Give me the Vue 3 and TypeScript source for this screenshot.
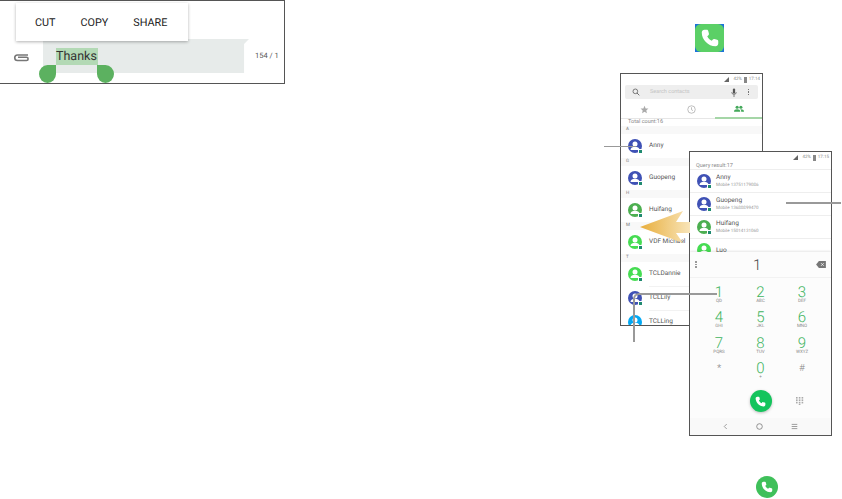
<template>
  <div class="page">
    <!-- message snippet -->
    <div class="snippet">
      <div class="popup">
        <span>CUT</span>
        <span>COPY</span>
        <span>SHARE</span>
      </div>
      <div class="compose">
        <svg class="clip" viewBox="0 0 16 9" width="16" height="9">
          <path d="M15 2H4.500a2.500 2.500 0 0 0 0 5.500h9a1.600 1.600 0 0 0 0-3.200H5" fill="none" stroke="#777" stroke-width="1.600" />
        </svg>
        <div class="bubble">
          <span class="selected">Thanks</span>
          <i class="handle handle-left"></i>
          <i class="handle handle-right"></i>
        </div>
        <span class="counter">154 / 1</span>
      </div>
    </div>

    <!-- top launcher icon -->
    <div class="launcher">
      <div class="launcher-face">
        <svg viewBox="0 0 24 24" width="22" height="22">
          <path :d="callPath" fill="#fff" />
        </svg>
      </div>
    </div>

    <!-- contacts phone -->
    <div class="phone phone-contacts">
      <div class="status">
        <svg viewBox="0 0 6 6" width="5" height="5"><path d="M0 6 6 0v6z" fill="#666" /></svg>
        <span>42%</span>
        <i class="battery"></i>
        <span>17:14</span>
      </div>
      <div class="search">
        <svg viewBox="0 0 12 12" width="8" height="8">
          <circle cx="5" cy="5" r="3.500" fill="none" stroke="#666" stroke-width="1.300" />
          <path d="m7.500 7.500 3.500 3.500" stroke="#666" stroke-width="1.400" />
        </svg>
        <span class="search-text">Search contacts</span>
        <svg viewBox="0 0 8 12" width="6" height="9">
          <rect x="2.500" y="0.500" width="3" height="7" rx="1.500" fill="#555" />
          <path d="M1 5.500a3 3 0 0 0 6 0M4 9v3" fill="none" stroke="#555" />
        </svg>
        <span class="kebab"><i></i><i></i><i></i></span>
      </div>
      <div class="tabs">
        <div class="tab">
          <svg viewBox="0 0 24 24" width="9" height="9"><path d="m12 2 3 7 7.500.6-5.700 5 1.700 7.400-6.500-4-6.500 4 1.700-7.400-5.700-5L9 9z" fill="#aaa" /></svg>
        </div>
        <div class="tab">
          <svg viewBox="0 0 12 12" width="9" height="9">
            <circle cx="6" cy="6" r="5" fill="none" stroke="#aaa" />
            <path d="M6 3v3.300l2 1.200" fill="none" stroke="#aaa" />
          </svg>
        </div>
        <div class="tab tab-active">
          <svg viewBox="0 0 16 10" width="10" height="7">
            <circle cx="5" cy="3" r="2.500" fill="#43a85a" />
            <circle cx="11" cy="3" r="2.500" fill="#43a85a" />
            <path d="M0 10c0-3 2-4 5-4s5 1 5 4zM11 6c3 0 5 1 5 4h-4.500c0-2-.5-3-1.500-3.800z" fill="#43a85a" />
          </svg>
        </div>
      </div>
      <div class="total">Total count:16</div>
      <template v-for="group in contactGroups" :key="group.letter">
        <div class="letter">{{ group.letter }}</div>
        <div v-for="c in group.items" :key="c.name" class="contact">
          <span class="avatar" :style="{ background: c.color }">
            <svg viewBox="0 0 14 14" width="14" height="14">
              <circle cx="7" cy="5" r="2.500" fill="#fff" />
              <path d="M2.500 11c0-2.300 2.200-3.200 4.500-3.200s4.500.9 4.500 3.200z" fill="#fff" />
            </svg>
            <i class="badge"></i>
          </span>
          <span class="contact-name">{{ c.name }}</span>
        </div>
      </template>
    </div>

    <!-- arrow between the two phones -->
    <svg class="swipe-arrow" viewBox="0 0 50 32" width="50" height="32">
      <defs>
        <linearGradient id="gold" x1="0" x2="1" y1="0" y2="0">
          <stop offset="0" stop-color="#e8ae3c" />
          <stop offset="1" stop-color="#f8e4b8" />
        </linearGradient>
      </defs>
      <path d="M0 16 43 0l-7 11h14v11H36l7 10z" fill="url(#gold)" />
    </svg>

    <!-- dialer phone -->
    <div class="phone phone-dialer">
      <div class="status status-dialer">
        <svg viewBox="0 0 6 6" width="5" height="5"><path d="M0 6 6 0v6z" fill="#666" /></svg>
        <span>42%</span>
        <i class="battery"></i>
        <span>17:15</span>
      </div>
      <div class="total query">Query result:17</div>
      <div class="results">
        <div v-for="r in results" :key="r.name" class="result">
          <span class="avatar" :style="{ background: r.color }">
            <svg viewBox="0 0 14 14" width="14" height="14">
              <circle cx="7" cy="5" r="2.500" fill="#fff" />
              <path d="M2.500 11c0-2.300 2.200-3.200 4.500-3.200s4.500.9 4.500 3.200z" fill="#fff" />
            </svg>
            <i class="badge"></i>
          </span>
          <div class="result-text">
            <div class="result-name">{{ r.name }}</div>
            <div class="result-number">{{ r.number }}</div>
          </div>
        </div>
      </div>
      <div class="dialer">
        <div class="display">
          <span class="kebab kebab-light"><i></i><i></i><i></i></span>
          <span class="display-num">1</span>
          <svg viewBox="0 0 14 10" width="10" height="7">
            <path d="M4 0h10v10H4L0 5z" fill="#777" />
            <path d="m7 3 4 4m0-4L7 7" stroke="#fff" />
          </svg>
        </div>
        <div class="keys">
          <div v-for="k in keys" :key="k.digit" class="key">
            <span class="digit" :class="{ symbol: k.symbol }">{{ k.digit }}</span>
            <span class="sub">{{ k.sub }}</span>
          </div>
        </div>
        <div class="call-row">
          <span class="call-btn">
            <svg viewBox="0 0 24 24" width="13" height="13"><path :d="callPath" fill="#fff" /></svg>
          </span>
          <svg class="pad" viewBox="0 0 10 10" width="8" height="8">
            <g fill="#aaa">
              <template v-for="y in [0, 3, 6]" :key="y">
                <rect v-for="x in [0, 3.5, 7]" :key="x" :x="x" :y="y" width="2" height="2" />
              </template>
              <rect x="3.500" y="8.500" width="2" height="1.500" />
            </g>
          </svg>
        </div>
        <div class="nav">
          <svg viewBox="0 0 8 10" width="5" height="7"><path d="M6 1 2 5l4 4" fill="none" stroke="#777" stroke-width="1.100" /></svg>
          <svg viewBox="0 0 10 10" width="7" height="7"><circle cx="5" cy="5" r="4" fill="none" stroke="#777" stroke-width="1.100" /></svg>
          <svg viewBox="0 0 10 10" width="7" height="7"><path d="M1 2h8M1 5h8M1 8h8" stroke="#777" stroke-width="1" /></svg>
        </div>
      </div>
    </div>

    <!-- callout lines -->
    <i class="line line-anny"></i>
    <i class="line line-result"></i>
    <i class="line-corner"></i>

    <!-- bottom call button -->
    <span class="call-bottom">
      <svg viewBox="0 0 24 24" width="14" height="14"><path :d="callPath" fill="#fff" /></svg>
    </span>
  </div>
</template>

<script setup lang="ts">
interface Contact {
  name: string
  color: string
}

const BLUE = '#3f51b5'
const GREEN = '#4caf50'
const LIME = '#46dc52'
const SKY = '#03a9f4'

// rounded handset, same shape in all three call icons
const callPath =
  'M6 3h2.500c.8 0 1.300.5 1.500 1.200l.8 3c.2.7 0 1.300-.5 1.700l-1.300 1.100c1 2.200 2.800 4 5 5l1.100-1.300c.4-.5 1-.7 1.700-.5l3 .8c.7.2 1.200.7 1.200 1.500V18c0 1.600-1.400 3-3 3C10 21 3 14 3 6c0-1.600 1.400-3 3-3z'

const contactGroups: { letter: string; items: Contact[] }[] = [
  { letter: 'A', items: [{ name: 'Anny', color: BLUE }] },
  { letter: 'G', items: [{ name: 'Guopeng', color: BLUE }] },
  { letter: 'H', items: [{ name: 'Huifang', color: GREEN }] },
  { letter: 'M', items: [{ name: 'VDF Michael', color: LIME }] },
  {
    letter: 'T',
    items: [
      { name: 'TCLDannie', color: LIME },
      { name: 'TCLLily', color: BLUE },
      { name: 'TCLLing', color: SKY },
    ],
  },
]

const results = [
  { name: 'Anny', number: 'Mobile 13751179086', color: BLUE },
  { name: 'Guopeng', number: 'Mobile 13680899470', color: BLUE },
  { name: 'Huifang', number: 'Mobile 15014131060', color: GREEN },
  { name: 'Luo', number: '', color: LIME },
]

const keys = [
  { digit: '1', sub: 'QD' },
  { digit: '2', sub: 'ABC' },
  { digit: '3', sub: 'DEF' },
  { digit: '4', sub: 'GHI' },
  { digit: '5', sub: 'JKL' },
  { digit: '6', sub: 'MNO' },
  { digit: '7', sub: 'PQRS' },
  { digit: '8', sub: 'TUV' },
  { digit: '9', sub: 'WXYZ' },
  { digit: '*', sub: '', symbol: true },
  { digit: '0', sub: '+' },
  { digit: '#', sub: '', symbol: true },
]
</script>

<style>
body {
  background: #fff;
}
</style>

<style scoped>
.page {
  position: relative;
  width: 842px;
  height: 499px;
  overflow: hidden;
  background: #fff;
  font-family: Roboto, "Liberation Sans", sans-serif;
  text-rendering: geometricPrecision;
}

.snippet {
  position: relative;
  box-sizing: border-box;
  width: 285px;
  height: 84px;
  padding-top: 38px;
  border: solid #555;
  border-width: 1px 1px 1px 0;
  overflow: hidden;
}
.popup {
  position: absolute;
  left: 16px;
  top: 2px;
  width: 172px;
  height: 38px;
  box-sizing: border-box;
  padding: 1px 0 0 19px;
  display: flex;
  align-items: center;
  gap: 25px;
  background: #fff;
  box-shadow: 0 1px 3px rgba(0, 0, 0, 0.3);
  font-size: 10.800px;
  color: #222;
  z-index: 2;
}
.compose {
  display: flex;
  align-items: flex-start;
}
.clip {
  margin: 14px 15px 0 13px;
}
.bubble {
  position: relative;
  width: 206px;
  height: 34px;
  margin-left: -1px;
}
/* the tail on the top right is cut out of the background only, the handles hang below it */
.bubble::before {
  content: "";
  position: absolute;
  inset: 0;
  background: #e7ebea;
  clip-path: polygon(0 0, 100% 0, 97.600% 15%, 97.600% 100%, 0 100%);
}
.selected {
  position: absolute;
  left: 13px;
  top: 9px;
  width: 42px;
  height: 17px;
  line-height: 18px;
  background: #b3d9b5;
  font-size: 12.500px;
  color: #333;
  white-space: nowrap;
}
.handle {
  position: absolute;
  top: 26px;
  width: 17px;
  height: 18px;
  background: #5cb160;
  border-radius: 50%;
}
.handle-left {
  left: -4px;
  border-top-right-radius: 0;
}
.handle-right {
  left: 54px;
  border-top-left-radius: 0;
}
.counter {
  margin: 12px 0 0 6px;
  font-size: 7.500px;
  color: #555;
  white-space: nowrap;
}

.launcher {
  position: absolute;
  left: 695px;
  top: 24px;
  width: 29px;
  height: 28px;
  background: #1b73d8;
}
.launcher-face {
  width: 100%;
  height: 100%;
  display: flex;
  align-items: center;
  justify-content: center;
  background: #5bd066;
  border-radius: 6px;
}

.phone {
  position: absolute;
  box-sizing: border-box;
  width: 143px;
  border: 1px solid #555;
  background: #fff;
  overflow: hidden;
}
.phone-contacts {
  left: 620px;
  top: 73px;
  height: 253px;
}
.phone-dialer {
  left: 689px;
  top: 151px;
  height: 285px;
}

.status {
  height: 11px;
  display: flex;
  align-items: center;
  justify-content: flex-end;
  gap: 2px;
  padding-right: 2px;
  font-size: 4.500px;
  color: #888;
}
.battery {
  width: 3px;
  height: 6px;
  background: #888;
}
.status svg {
  margin-right: 2px;
}
.search {
  height: 14px;
  margin: 0 4px;
  padding: 0 9px 0 7px;
  display: flex;
  align-items: center;
  background: #eeeeee;
  border-radius: 2px;
}
.search-text {
  flex: 1;
  margin-left: 10px;
  font-size: 5.500px;
  color: #c4c4c4;
}
.kebab {
  display: flex;
  flex-direction: column;
  gap: 1px;
  margin-left: 11px;
}
.kebab i {
  width: 1.500px;
  height: 1.500px;
  background: #777;
}
.kebab-light {
  margin-left: 0;
}
.kebab-light i {
  background: #999;
}
.tabs {
  display: flex;
  height: 19px;
  margin-top: 1px;
  border-bottom: 1px solid #e6e6e6;
  box-sizing: border-box;
}
.tab {
  flex: 1;
  display: flex;
  align-items: center;
  justify-content: center;
}
.tab-active {
  border-bottom: 2px solid #a5d6a7;
  margin-bottom: -1px;
}
.total {
  height: 7px;
  line-height: 6px;
  padding-left: 7px;
  font-size: 5.500px;
  color: #888;
}
.query {
  height: 6px;
  padding-left: 6px;
}
.letter {
  height: 8px;
  line-height: 8px;
  padding-left: 5px;
  background: #f8f8f8;
  font-size: 4.500px;
  color: #777;
}
.contact {
  height: 24px;
  display: flex;
  align-items: center;
  padding-left: 7px;
}
.avatar {
  position: relative;
  flex: none;
  width: 14px;
  height: 14px;
  border-radius: 50%;
  display: block;
}
.avatar svg {
  display: block;
}
.badge {
  position: absolute;
  right: -1px;
  bottom: -0.500px;
  width: 5px;
  height: 5px;
  background: #1f8a70;
  border: 0.500px solid #fff;
  box-sizing: border-box;
}
.contact-name {
  flex: 1;
  margin-left: 7px;
  line-height: 23px;
  height: 24px;
  font-size: 6.500px;
  color: #555;
}
.contact + .contact .contact-name {
  box-shadow: inset 0 1px #f2f2f2;
}

.swipe-arrow {
  position: absolute;
  left: 640px;
  top: 211px;
  z-index: 1;
}

.result {
  height: 23px;
  box-sizing: border-box;
  display: flex;
  align-items: center;
  padding-left: 7px;
  border-top: 1px solid #eee;
}
.result-text {
  margin-left: 5px;
}
.result-name {
  font-size: 6.500px;
  line-height: 8px;
  color: #555;
}
.result-number {
  margin-top: 1px;
  font-size: 4.500px;
  line-height: 8px;
  color: #999;
}
.dialer {
  position: absolute;
  left: 0;
  right: 0;
  top: 100px;
  bottom: 0;
  background: #fcfcfc;
  box-shadow: 0 -1px 2px rgba(0, 0, 0, 0.1);
}
.display {
  height: 25px;
  display: flex;
  align-items: center;
  justify-content: space-between;
  padding: 0 5px 0 5px;
  border-bottom: 1px solid #f2f2f2;
}
.display-num {
  margin-left: 2px;
  font-size: 15px;
  font-weight: 300;
  color: #444;
}
.keys {
  display: grid;
  grid-template-columns: repeat(3, 41.500px);
  grid-auto-rows: 25.300px;
  justify-content: center;
  margin-top: 8px;
}
.key {
  display: flex;
  flex-direction: column;
  align-items: center;
}
.digit {
  font-size: 15px;
  line-height: 13px;
  font-weight: 300;
  color: #3fb45f;
}
.digit.symbol {
  color: #888;
  font-size: 10px;
}
.sub {
  font-size: 4.500px;
  line-height: 6px;
  color: #888;
}
.call-row {
  position: relative;
  height: 24px;
  margin-top: 3px;
  display: flex;
  justify-content: center;
}
.call-btn {
  width: 22px;
  height: 22px;
  border-radius: 50%;
  background: #14c45c;
  display: flex;
  align-items: center;
  justify-content: center;
  box-shadow: 0 1px 3px rgba(0, 0, 0, 0.25);
}
.pad {
  position: absolute;
  left: 106px;
  top: 7px;
}
.nav {
  position: absolute;
  left: 0;
  right: 0;
  bottom: 0;
  height: 17px;
  display: flex;
  align-items: center;
  justify-content: center;
  gap: 28px;
  background: #f9f9f9;
}

.line {
  position: absolute;
  background: #999;
  z-index: 3;
}
.line-anny {
  left: 604px;
  top: 146px;
  width: 32px;
  height: 1px;
}
.line-result {
  left: 786px;
  top: 202px;
  width: 55px;
  height: 2px;
}
.line-corner {
  position: absolute;
  left: 633px;
  top: 293px;
  width: 84px;
  height: 49px;
  box-sizing: border-box;
  border: solid #999;
  border-width: 2px 0 0 2px;
  border-top-left-radius: 6px;
  z-index: 3;
}

.call-bottom {
  position: absolute;
  left: 756px;
  top: 476px;
  width: 22px;
  height: 22px;
  border-radius: 50%;
  background: #3fc05a;
  display: flex;
  align-items: center;
  justify-content: center;
}
</style>
